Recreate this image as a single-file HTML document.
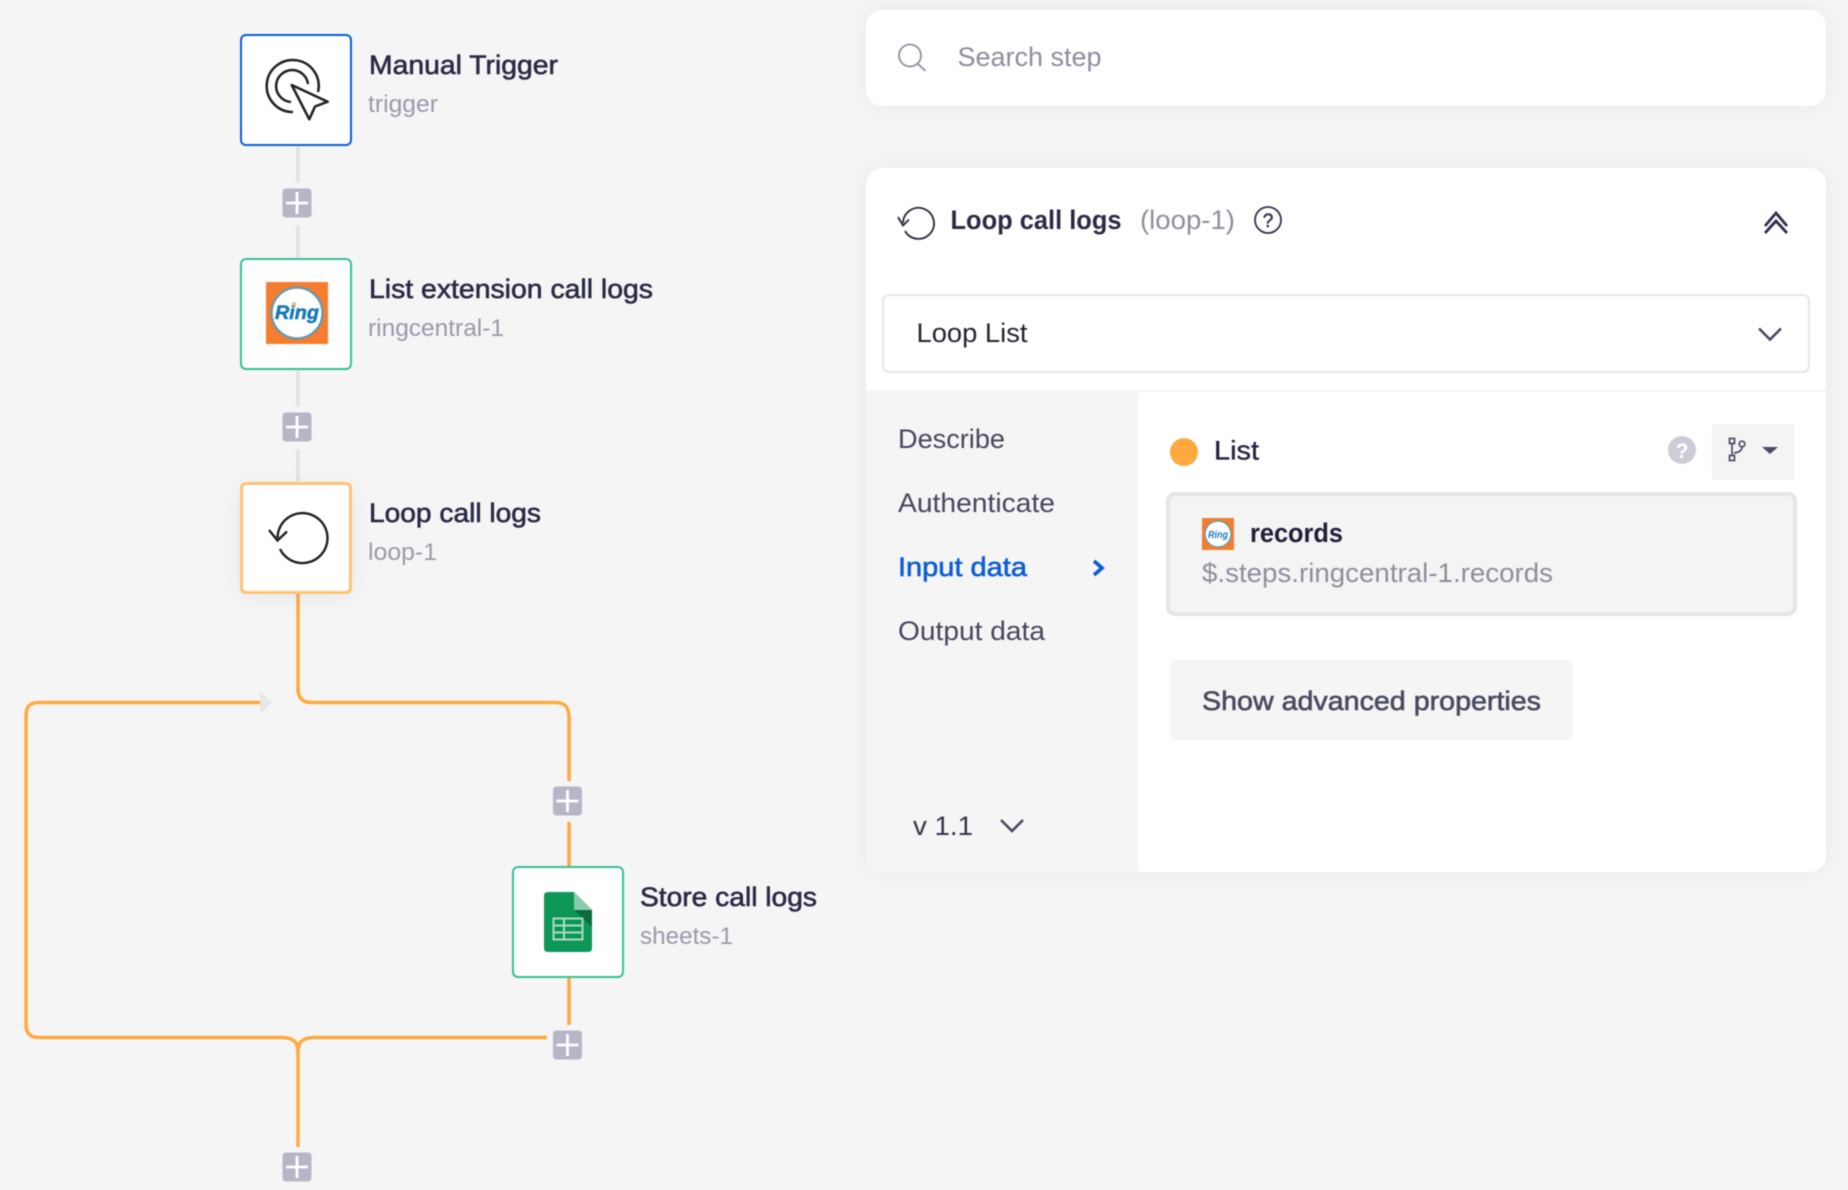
<!DOCTYPE html>
<html lang="en">
<head>
<meta charset="utf-8">
<title>Loop call logs</title>
<style>
html,body{margin:0;padding:0;background:#f5f5f5;}
#root{position:relative;width:1848px;height:1190px;overflow:hidden;background:#f5f5f5;filter:blur(.5px);}
.panel{position:absolute;left:866px;width:960px;background:#fff;border-radius:16px;box-shadow:0 0 22px rgba(0,0,0,.055);}
.side{position:absolute;left:866px;top:390px;width:272px;height:482px;background:#f5f5f5;border-bottom-left-radius:16px;}
.rule{position:absolute;left:1138px;top:390px;width:688px;height:2px;background:#f4f4f4;}
.node{position:absolute;box-sizing:border-box;width:112px;height:112px;background:#fff;border-radius:6px;border:2px solid #34c38f;}
svg{position:absolute;left:0;top:0;}
text{font-family:"Liberation Sans",sans-serif;font-size:27px;}
.t{fill:#2a2a45;stroke:#2a2a45;stroke-width:.6;}
.s{fill:#9a9aaa;font-size:24px;}
.m{fill:#47475e;}
</style>
</head>
<body>
<div id="root">
  <div class="panel" style="top:10px;height:96px"></div>
  <div class="panel" style="top:168px;height:704px"></div>
  <div class="side"></div>
  <div class="rule"></div>
  <div style="position:absolute;left:882px;top:294px;width:928px;height:79px;box-sizing:border-box;border:2px solid #e6e6eb;border-radius:7px;background:#fff"></div>
  <div style="position:absolute;left:1166px;top:492px;width:631px;height:124px;box-sizing:border-box;border:4px solid #e5e5e5;border-radius:9px;background:#f4f4f4"></div>
  <div style="position:absolute;left:1170px;top:660px;width:403px;height:80px;border-radius:7px;background:#f5f5f5"></div>
  <div style="position:absolute;left:1712px;top:424px;width:82px;height:56px;background:#f4f4f4"></div>

  <svg width="1848" height="1190" viewBox="0 0 1848 1190" style="z-index:1">
    <!-- grey connectors -->
    <g stroke="#e2e2e8" stroke-width="3.5" fill="none">
      <path d="M298 146V183M298 225V258M298 370V407M298 449V482"/>
    </g>
    <!-- orange connectors -->
    <g stroke="#ffa940" stroke-width="3.5" fill="none">
      <path d="M260 702.5H40C30 702.5 26 706 26 716V1024C26 1034 30 1037.5 40 1037.5H282C294 1038 298 1042 298 1052V1147"/>
      <path d="M547 1037.5H314C302 1038 298 1042 298 1052"/>
      <path d="M298 594V688C298 698 302 702.5 312 702.5H555C565 702.5 569 707 569 718V781"/>
      <path d="M569 822V866M569 978V1025"/>
    </g>
    <path d="M260 692L272 702.5L260 714Z" fill="#e6e6eb"/>
  </svg>

  <div class="node" style="left:240px;top:34px;border-color:#0b5ed7;z-index:2"></div>
  <div class="node" style="left:240px;top:258px;z-index:2"></div>
  <div class="node" style="left:240px;top:482px;border:3px solid #ffc374;box-shadow:0 4px 22px rgba(0,0,0,.06);z-index:2"></div>
  <div class="node" style="left:512px;top:866px;z-index:2"></div>

  <svg width="1848" height="1190" viewBox="0 0 1848 1190" style="z-index:3">
    <!-- plus buttons -->
    <g>
      <g transform="translate(297 203)"><rect x="-14.5" y="-14.5" width="29" height="29" rx="3.5" fill="#b6b6c6"/><path d="M-11 0H11M0 -11V11" stroke="#fff" stroke-width="2.8"/></g>
      <g transform="translate(297 427)"><rect x="-14.5" y="-14.5" width="29" height="29" rx="3.5" fill="#b6b6c6"/><path d="M-11 0H11M0 -11V11" stroke="#fff" stroke-width="2.8"/></g>
      <g transform="translate(567.5 801)"><rect x="-14.5" y="-14.5" width="29" height="29" rx="3.5" fill="#b6b6c6"/><path d="M-11 0H11M0 -11V11" stroke="#fff" stroke-width="2.8"/></g>
      <g transform="translate(567.5 1045)"><rect x="-14.5" y="-14.5" width="29" height="29" rx="3.5" fill="#b6b6c6"/><path d="M-11 0H11M0 -11V11" stroke="#fff" stroke-width="2.8"/></g>
      <g transform="translate(297 1167)"><rect x="-14.5" y="-14.5" width="29" height="29" rx="3.5" fill="#b6b6c6"/><path d="M-11 0H11M0 -11V11" stroke="#fff" stroke-width="2.8"/></g>
    </g>

    <!-- cursor icon -->
    <g fill="none" stroke="#1f1f24" stroke-width="2.5" stroke-linejoin="round">
      <path d="M318 92A26 26 0 1 0 293 112"/>
      <path d="M308 84A16 16 0 1 0 291 102"/>
      <path d="M291.7 85L327.7 101.7L315 106.5L309.3 119.3Z"/>
    </g>

    <!-- ring logo large -->
    <rect x="266" y="282" width="62" height="62" fill="#f67c30"/>
    <circle cx="297" cy="313" r="25.5" fill="#fff" stroke="#6a9aa8" stroke-width="2.4"/>
    <text x="275" y="319" font-weight="700" font-style="italic" textLength="44" lengthAdjust="spacingAndGlyphs" stroke="#1679ba" stroke-width=".5" style="font-size:19px" fill="#1679ba">Ring</text>
    <circle cx="294" cy="304" r="2" fill="#f9b58a"/>

    <!-- loop icon node -->
    <g fill="none" stroke="#1f1f24" stroke-width="2.4">
      <path d="M280 549A25 25 0 1 0 277.5 538"/>
      <path d="M269 530L277.5 540.5L287 531.5"/>
    </g>

    <!-- sheets -->
    <path d="M548 892H574L592 910V948Q592 952 588 952H548Q544 952 544 948V896Q544 892 548 892Z" fill="#0e9657"/>
    <path d="M574 892L592 910H574Z" fill="#86cdab"/>
    <path d="M574 910H592V927Z" fill="#0b6b3e"/>
    <g fill="none" stroke="#a9dcc2" stroke-width="2">
      <rect x="553.5" y="918.5" width="29" height="21"/>
      <path d="M553.5 925.5H582.5M553.5 932.5H582.5M564 918.5V939.5"/>
    </g>

    <!-- node labels -->
    <text class="t" x="369" y="74" textLength="189" lengthAdjust="spacingAndGlyphs">Manual Trigger</text>
    <text class="s" x="368" y="112" textLength="70" lengthAdjust="spacingAndGlyphs">trigger</text>
    <text class="t" x="369" y="298" textLength="284" lengthAdjust="spacingAndGlyphs">List extension call logs</text>
    <text class="s" x="368" y="336" textLength="136" lengthAdjust="spacingAndGlyphs">ringcentral-1</text>
    <text class="t" x="369" y="522" textLength="172" lengthAdjust="spacingAndGlyphs">Loop call logs</text>
    <text class="s" x="368" y="560" textLength="69" lengthAdjust="spacingAndGlyphs">loop-1</text>
    <text class="t" x="640" y="906" textLength="177" lengthAdjust="spacingAndGlyphs">Store call logs</text>
    <text class="s" x="640" y="944" textLength="93" lengthAdjust="spacingAndGlyphs">sheets-1</text>

    <!-- search -->
    <g fill="none" stroke="#8e8e9e" stroke-width="1.8">
      <circle cx="910" cy="55.5" r="11"/>
      <path d="M918 64L925.5 71"/>
    </g>
    <text x="957.5" y="66" fill="#8d8d9f" textLength="144" lengthAdjust="spacingAndGlyphs">Search step</text>

    <!-- header -->
    <g fill="none" stroke="#2b2b3a" stroke-width="1.8">
      <path d="M905 231A15.5 15.5 0 1 0 903 223"/>
      <path d="M898 217L903 225.5L909 219.5"/>
    </g>
    <text x="950.5" y="229" font-weight="700" fill="#2a2a45" textLength="171" lengthAdjust="spacingAndGlyphs">Loop call logs</text>
    <text x="1140" y="229" fill="#8e8ea0" textLength="95" lengthAdjust="spacingAndGlyphs">(loop-1)</text>
    <circle cx="1268" cy="220" r="13" fill="none" stroke="#33334f" stroke-width="1.8"/>
    <text x="1268" y="227" text-anchor="middle" fill="#33334f" stroke="#33334f" stroke-width=".5" style="font-size:19px">?</text>
    <g fill="none" stroke="#2f2f4d" stroke-width="2.8">
      <path d="M1765 226L1776 213L1787 226"/>
      <path d="M1765 233L1776 221L1787 233"/>
    </g>

    <!-- select -->
    <text x="916.5" y="342" fill="#24242e" textLength="111" lengthAdjust="spacingAndGlyphs">Loop List</text>
    <path d="M1759 328.5L1770 339.5L1781 328.5" fill="none" stroke="#4a4a60" stroke-width="2.6"/>

    <!-- sidebar -->
    <text class="m" x="898" y="448" textLength="107" lengthAdjust="spacingAndGlyphs">Describe</text>
    <text class="m" x="898" y="512" textLength="157" lengthAdjust="spacingAndGlyphs">Authenticate</text>
    <text x="898" y="576" fill="#0b5ed7" stroke="#0b5ed7" stroke-width=".6" textLength="129" lengthAdjust="spacingAndGlyphs">Input data</text>
    <path d="M1094 561L1102 568L1094 575" fill="none" stroke="#0b5ed7" stroke-width="3.8"/>
    <text class="m" x="898" y="640" textLength="147" lengthAdjust="spacingAndGlyphs">Output data</text>
    <text x="913" y="835" fill="#35354a" textLength="60" lengthAdjust="spacingAndGlyphs">v 1.1</text>
    <path d="M1001 820L1012 831L1023 820" fill="none" stroke="#4a4a60" stroke-width="2.6"/>

    <!-- list field -->
    <circle cx="1184" cy="452" r="14" fill="#ffa940"/>
    <text x="1214" y="459.5" fill="#24243f" stroke="#24243f" stroke-width=".35" textLength="45" lengthAdjust="spacingAndGlyphs">List</text>
    <circle cx="1682" cy="450" r="14" fill="#ccccd6"/>
    <text x="1682" y="458" text-anchor="middle" font-weight="700" fill="#fff" style="font-size:21px">?</text>
    <g fill="none" stroke="#4a4a60" stroke-width="1.7">
      <rect x="1729.5" y="438.5" width="5" height="5"/>
      <rect x="1729.5" y="455.5" width="5" height="5"/>
      <circle cx="1742" cy="444" r="2.8"/>
      <path d="M1732 444V455M1742 447Q1742 452 1734 453"/>
    </g>
    <path d="M1762 447H1778L1770 454Z" fill="#4a4a60"/>

    <!-- small ring logo -->
    <rect x="1202" y="518" width="32" height="32" fill="#f67c30"/>
    <circle cx="1218" cy="534" r="13" fill="#fff" stroke="#6a9aa8" stroke-width="1.4"/>
    <text x="1208" y="538" font-weight="700" font-style="italic" textLength="20" lengthAdjust="spacingAndGlyphs" style="font-size:10px" fill="#1679ba">Ring</text>

    <text x="1250" y="542" font-weight="700" fill="#20203a" textLength="93" lengthAdjust="spacingAndGlyphs">records</text>
    <text x="1202" y="582" fill="#8e8e9e" textLength="351" lengthAdjust="spacingAndGlyphs">$.steps.ringcentral-1.records</text>
    <text x="1202" y="710" fill="#4a4a60" stroke="#4a4a60" stroke-width=".6" textLength="339" lengthAdjust="spacingAndGlyphs">Show advanced properties</text>
  </svg>
</div>
</body>
</html>
